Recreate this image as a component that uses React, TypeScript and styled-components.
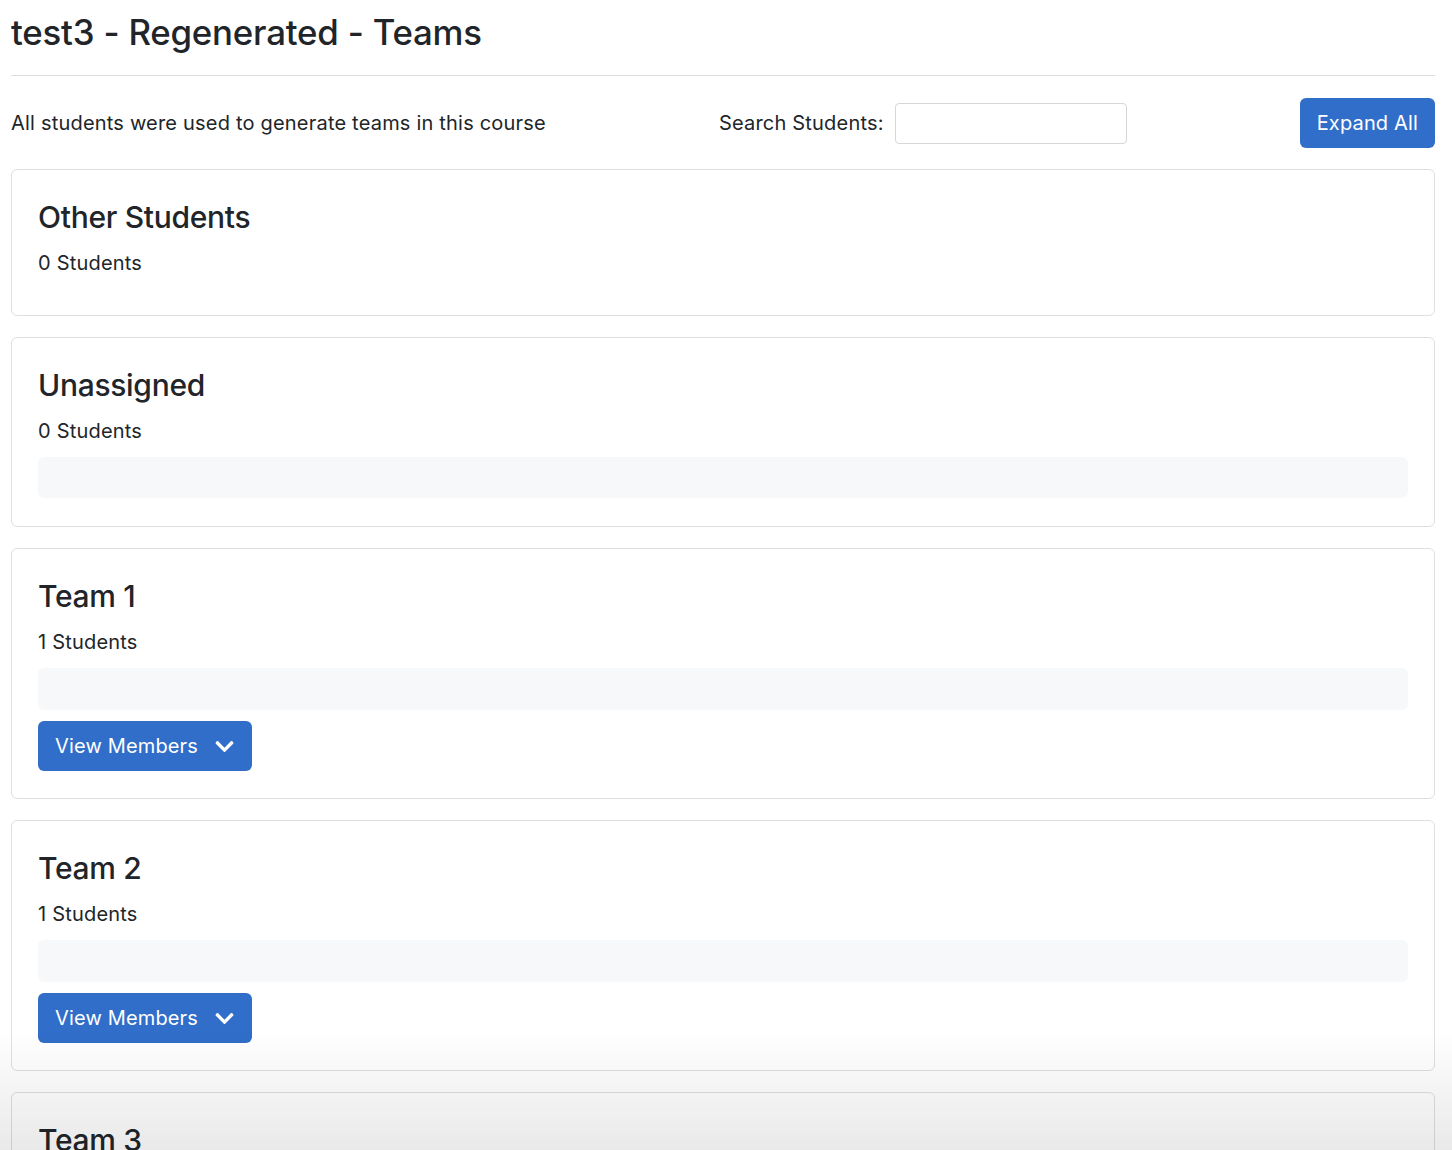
import React from "react";
import styled, { createGlobalStyle } from "styled-components";
import { FaChevronDown } from "react-icons/fa";

const GlobalStyle = createGlobalStyle`
  html, body {
    margin: 0;
    padding: 0;
    background: #ffffff;
    color: #212529;
    font-family: Inter, "Helvetica Neue", Arial, sans-serif;
  }
  * { box-sizing: border-box; }
`;

const Page = styled.div`
  padding: 11px 17px 0 11px;
`;

const Heading = styled.h1`
  margin: 0;
  font-size: 34.8px;
  font-weight: 500;
  line-height: 43px;
  letter-spacing: -0.2px;
`;

const Rule = styled.hr`
  margin: 21px 0 22px;
  border: 0;
  border-top: 1px solid #dcdee0;
`;

const Toolbar = styled.div`
  display: flex;
  align-items: center;
  justify-content: space-between;
  height: 50px;
  margin-bottom: 21px;
`;

const Note = styled.span`
  font-size: 20px;
  line-height: 30px;
  letter-spacing: 0.2px;
`;

const SearchGroup = styled.label`
  display: flex;
  align-items: center;
  gap: 11px;
  font-size: 20px;
  letter-spacing: 0.2px;
`;

const SearchInput = styled.input`
  width: 232px;
  height: 41px;
  border: 1px solid #d4d7da;
  border-radius: 4px;
  padding: 6px 12px;
  font-size: 18px;
  font-family: inherit;
  outline: none;
`;

const PrimaryButton = styled.button`
  display: inline-flex;
  align-items: center;
  gap: 16px;
  height: 50px;
  padding: 0 17px;
  border: 0;
  border-radius: 6px;
  background: #306ec9;
  color: #ffffff;
  font-family: inherit;
  font-size: 20px;
  letter-spacing: 0.15px;
  font-weight: 400;
  cursor: pointer;
  align-self: flex-start;
`;

const ViewButton = styled(PrimaryButton)`
  margin: 11px 0 1px;
  svg {
    width: 21px;
    height: 21px;
  }
`;

const Card = styled.section`
  display: flex;
  flex-direction: column;
  border: 1px solid #dedfe0;
  border-radius: 6px;
  padding: 28px 26px 26px;
  margin-bottom: 21px;
`;

const CardTitle = styled.h2`
  margin: 0 0 12px;
  font-size: 30px;
  font-weight: 500;
  line-height: 38px;
  letter-spacing: -0.3px;
`;

const Count = styled.p`
  margin: 0 0 11px;
  font-size: 20px;
  line-height: 30px;
  letter-spacing: 0.2px;
`;

const MemberArea = styled.div<{ $height: number }>`
  height: ${(p) => p.$height}px;
  background: #f7f8f9;
  border-radius: 6px;
  &:last-child {
    margin-bottom: 2px;
  }
`;

const BottomShade = styled.div`
  position: fixed;
  left: 0;
  right: 0;
  bottom: 0;
  height: 120px;
  pointer-events: none;
  background: linear-gradient(to bottom, rgba(0, 0, 0, 0), rgba(0, 0, 0, 0.085));
`;

type Group = {
  name: string;
  count: number;
  area: boolean;
  members: boolean;
  areaHeight?: number;
};

const groups: Group[] = [
  { name: "Other Students", count: 0, area: false, members: false },
  { name: "Unassigned", count: 0, area: true, members: false, areaHeight: 41 },
  { name: "Team 1", count: 1, area: true, members: true, areaHeight: 42 },
  { name: "Team 2", count: 1, area: true, members: true, areaHeight: 42 },
  { name: "Team 3", count: 1, area: true, members: true, areaHeight: 42 },
];

export default function App() {
  return (
    <>
      <GlobalStyle />
      <Page>
        <Heading>test3 - Regenerated - Teams</Heading>
        <Rule />
        <Toolbar>
          <Note>All students were used to generate teams in this course</Note>
          <SearchGroup>
            Search Students:
            <SearchInput type="text" />
          </SearchGroup>
          <PrimaryButton>Expand All</PrimaryButton>
        </Toolbar>
        {groups.map((g) => (
          <Card key={g.name}>
            <CardTitle>{g.name}</CardTitle>
            <Count>{g.count} Students</Count>
            {g.area && <MemberArea $height={g.areaHeight ?? 42} />}
            {g.members && (
              <ViewButton>
                View Members
                <FaChevronDown />
              </ViewButton>
            )}
          </Card>
        ))}
      </Page>
      <BottomShade />
    </>
  );
}
